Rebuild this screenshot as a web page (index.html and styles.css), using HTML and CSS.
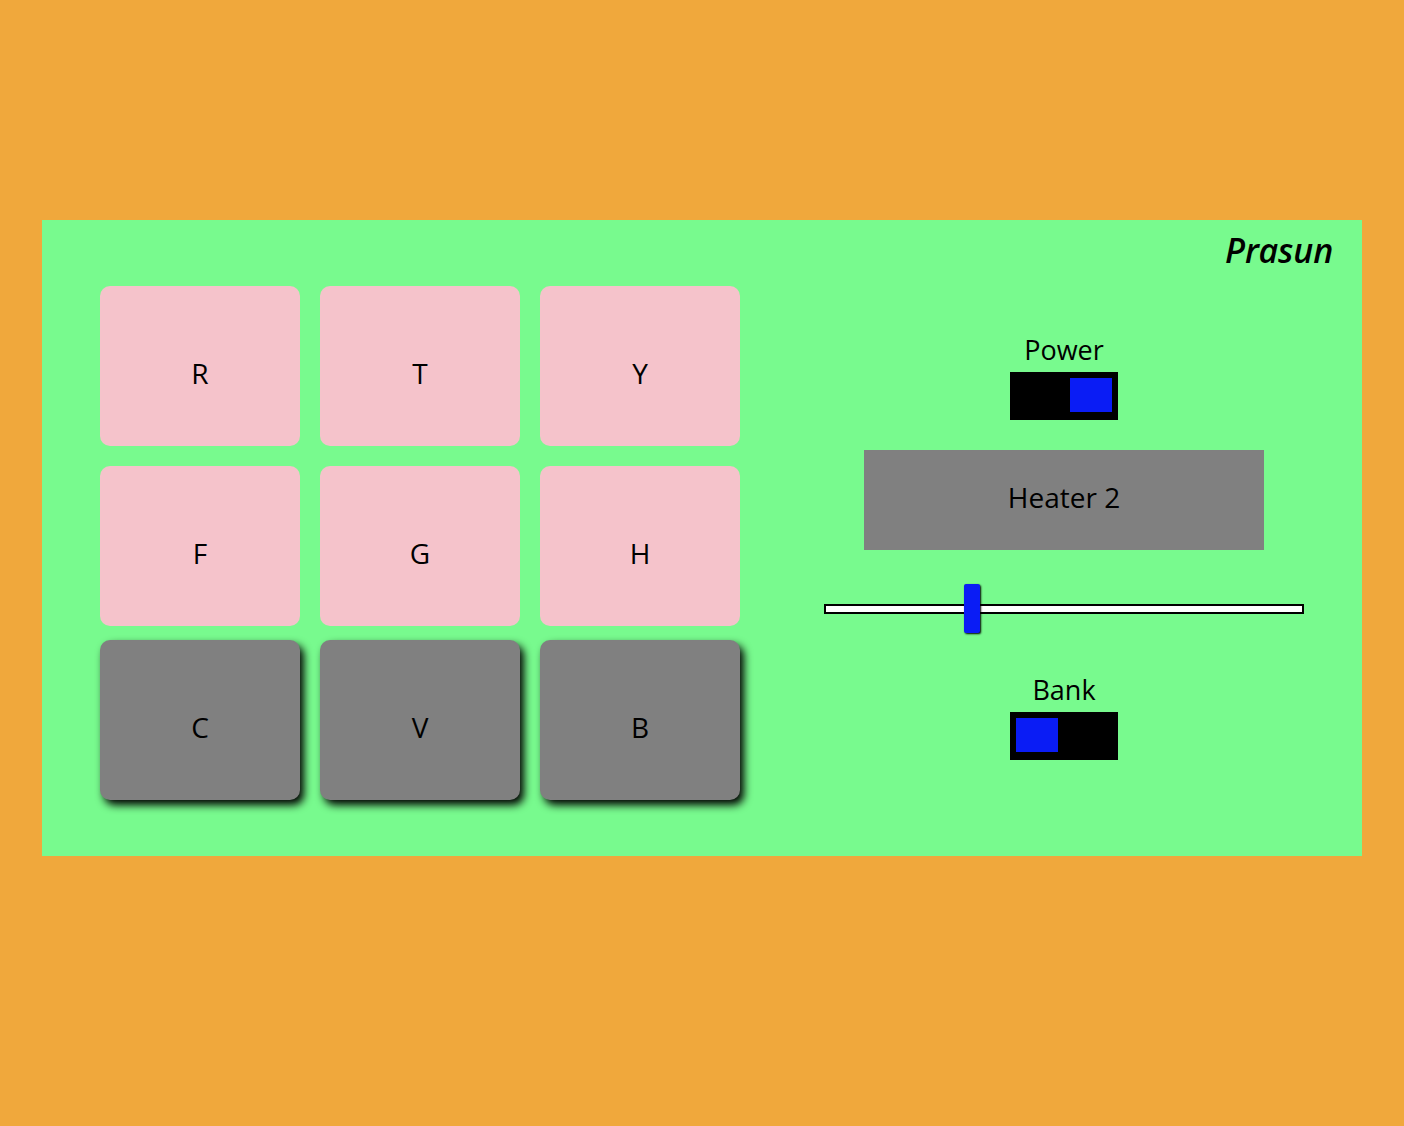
FILE: index.html
```html
<!DOCTYPE html>
<html lang="en">
<head>
<meta charset="utf-8">
<title>Drum Machine</title>
<link rel="stylesheet" href="styles.css">
</head>
<body>
<main class="machine">
  <header class="machine-header">
    <h1 class="brand">Prasun</h1>
  </header>
  <section class="machine-body">
    <div class="pad-grid">
      <div class="pad">R</div>
      <div class="pad">T</div>
      <div class="pad">Y</div>
      <div class="pad">F</div>
      <div class="pad">G</div>
      <div class="pad">H</div>
      <div class="pad pad-dark">C</div>
      <div class="pad pad-dark">V</div>
      <div class="pad pad-dark">B</div>
    </div>
    <div class="controls">
      <div class="control-label">Power</div>
      <div class="switch switch-on"><div class="switch-knob"></div></div>
      <div class="display">Heater 2</div>
      <div class="slider">
        <div class="slider-track"></div>
        <div class="slider-thumb" style="left: 140px;"></div>
      </div>
      <div class="control-label control-label-bank">Bank</div>
      <div class="switch"><div class="switch-knob"></div></div>
    </div>
  </section>
</main>
</body>
</html>
```
FILE: styles.css
```css
* { box-sizing: border-box; }

html, body {
  margin: 0;
  padding: 0;
}

body {
  background: #f0a83c;
  width: 1404px;
  height: 1126px;
  padding: 220px 42px 0 42px;
  font-family: "Open Sans", "DejaVu Sans", sans-serif;
  color: #000;
}

.machine {
  background: #78fa8e;
  width: 1320px;
  height: 636px;
  padding: 8px 58px 0 58px;
}

.machine-header {
  display: flex;
  justify-content: flex-end;
  margin-right: -29px;
}

.brand {
  margin: 0;
  font-size: 34px;
  line-height: 44px;
  font-weight: 600;
  font-style: italic;
  letter-spacing: -0.2px;
}

.machine-body {
  display: flex;
  gap: 84px;
  margin-top: 14px;
}

.pad-grid {
  display: grid;
  grid-template-columns: repeat(3, 200px);
  grid-auto-rows: 160px;
  gap: 20px;
  width: 640px;
}

.pad {
  background: #f5c3cb;
  border-radius: 10px;
  display: flex;
  align-items: center;
  justify-content: center;
  font-size: 28px;
  line-height: 38px;
  padding-top: 13px;
}

.pad-dark {
  background: #808080;
  margin-top: -6px;
  margin-bottom: 6px;
  box-shadow: 4px 5px 9px #000;
}

.controls {
  width: 480px;
  display: flex;
  flex-direction: column;
  align-items: center;
  padding-top: 45px;
}

.control-label {
  font-size: 27px;
  line-height: 37px;
}

.control-label-bank {
  margin-top: 37px;
}

.switch {
  width: 108px;
  height: 48px;
  background: #000;
  padding: 6px;
  margin-top: 4px;
  display: flex;
  justify-content: flex-start;
  align-items: flex-start;
}

.switch-on {
  justify-content: flex-end;
}

.switch-knob {
  width: 42px;
  height: 34px;
  background: #0a1cf5;
}

.display {
  width: 400px;
  height: 100px;
  margin-top: 30px;
  background: #808080;
  display: flex;
  align-items: center;
  justify-content: center;
  font-size: 28px;
  line-height: 38px;
  padding-bottom: 7px;
}

.slider {
  position: relative;
  width: 480px;
  height: 50px;
  margin-top: 34px;
  display: flex;
  align-items: center;
}

.slider-track {
  width: 100%;
  height: 10px;
  background: #fff;
  border: 2px solid #000;
}

.slider-thumb {
  position: absolute;
  top: 0;
  width: 16px;
  height: 49px;
  background: #0a1cf5;
  border-radius: 2px;
  box-shadow: 1px 1px 2px #000;
}
```
